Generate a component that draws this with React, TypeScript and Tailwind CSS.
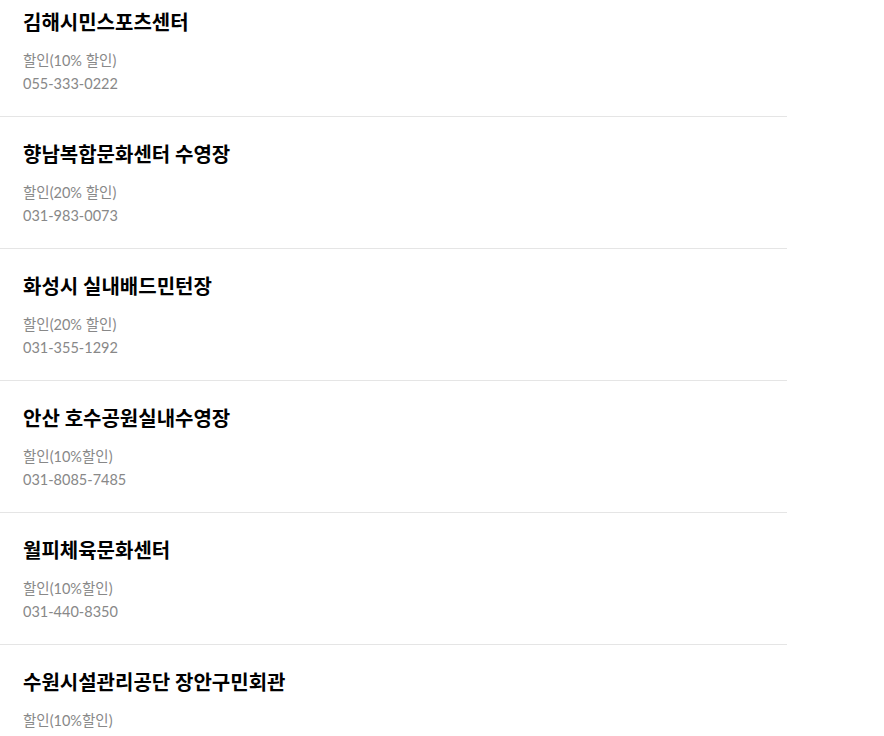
import React from 'react';

interface Facility {
  name: string;
  discount: string;
  phone?: string;
}

const facilities: Facility[] = [
  { name: '김해시민스포츠센터', discount: '할인(10% 할인)', phone: '055-333-0222' },
  { name: '향남복합문화센터 수영장', discount: '할인(20% 할인)', phone: '031-983-0073' },
  { name: '화성시 실내배드민턴장', discount: '할인(20% 할인)', phone: '031-355-1292' },
  { name: '안산 호수공원실내수영장', discount: '할인(10%할인)', phone: '031-8085-7485' },
  { name: '월피체육문화센터', discount: '할인(10%할인)', phone: '031-440-8350' },
  { name: '수원시설관리공단 장안구민회관', discount: '할인(10%할인)' },
];

export default function App() {
  return (
    <div className="w-[884px] h-[736px] overflow-hidden bg-white font-['Lato','Noto_Sans_CJK_KR',sans-serif]">
      <ul className="w-[787px] -mt-[15px]">
        {facilities.map(f => (
          <li key={f.name} className="border-b border-[#e5e5e5] pl-[23px] pt-[23px] pb-[21px]">
            <div className="text-[20px] leading-[28px] font-bold text-black">{f.name}</div>
            <div className="mt-[13px] text-[14.5px] leading-[23px] text-[#888888] min-h-[46px]">
              <div>{f.discount}</div>
              {f.phone && <div>{f.phone}</div>}
            </div>
          </li>
        ))}
      </ul>
    </div>
  );
}
